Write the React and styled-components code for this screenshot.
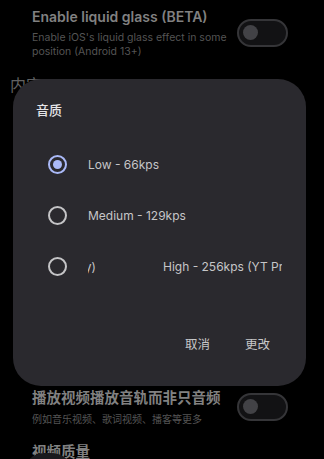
import styled, { createGlobalStyle } from "styled-components"

const GlobalStyle = createGlobalStyle`
  html, body {
    margin: 0;
    padding: 0;
    background: #000;
  }
  body {
    font-family: Inter, "Noto Sans", "Noto Sans CJK SC", sans-serif;
    overflow: hidden;
  }
`

const Screen = styled.div`
  position: relative;
  width: 324px;
  height: 459px;
  overflow: hidden;
  background: #000;
`

const Page = styled.div`
  padding: 6px 36px 0 32px;
  display: flex;
  flex-direction: column;
`

const SettingRow = styled.div`
  display: flex;
  align-items: center;
  justify-content: space-between;
  gap: 6px;
`

const SettingText = styled.div`
  display: flex;
  flex-direction: column;
  gap: ${p => p.$gap || 3}px;
  flex: 1;
  min-width: 0;
`

const SettingTitle = styled.div`
  font-size: ${p => p.$size || 14}px;
  line-height: 22px;
  font-weight: 600;
  color: #8c8c8c;
  white-space: nowrap;
`

const SettingSub = styled.div`
  font-size: ${p => p.$size || 10.5}px;
  line-height: 14px;
  color: #5c5c5c;
`

const Toggle = styled.div`
  flex: none;
  width: 43px;
  height: 24px;
  border: 2px solid #3a3a3d;
  border-radius: 14px;
  background: #141416;
  display: flex;
  align-items: center;
  padding-left: 4px;
  box-sizing: content-box;
  &::before {
    content: "";
    width: 15px;
    height: 15px;
    border-radius: 50%;
    background: #48484c;
  }
`

const SectionHeader = styled.div`
  margin: 15px 0 0 -22px;
  font-size: 16px;
  line-height: 22px;
  color: #6a6a6a;
`

const Hidden = styled.div`
  height: 291px;
`

const Scrim = styled.div`
  position: absolute;
  inset: 0;
  background: rgba(0, 0, 0, 0.08);
`

const Dialog = styled.div`
  position: absolute;
  left: 13px;
  top: 79px;
  width: 293px;
  height: 307px;
  box-sizing: border-box;
  border-radius: 28px;
  background: #2a292e;
  padding: 22px 24px 23px 23px;
  display: flex;
  flex-direction: column;
`

const DialogTitle = styled.div`
  font-size: 13px;
  line-height: 18px;
  color: #e4e4e6;
  font-weight: 500;
`

const Options = styled.div`
  margin-top: 20px;
  display: flex;
  flex-direction: column;
`

const Option = styled.div`
  height: 51px;
  display: flex;
  align-items: center;
  padding-left: 12px;
  gap: 21px;
`

const Radio = styled.div`
  flex: none;
  width: 15px;
  height: 15px;
  border-radius: 50%;
  border: 2px solid ${p => (p.$checked ? "#aab9f7" : "#c4c4c6")};
  display: flex;
  align-items: center;
  justify-content: center;
  &::after {
    content: "";
    display: ${p => (p.$checked ? "block" : "none")};
    width: 9px;
    height: 9px;
    border-radius: 50%;
    background: #aab9f7;
  }
`

const Label = styled.div`
  font-size: 12px;
  color: #c6c6c8;
  white-space: nowrap;
`

const MarqueeBox = styled.div`
  width: 198px;
  overflow: hidden;
`

const MarqueeTrack = styled.div`
  display: flex;
  width: max-content;
  transform: translateX(calc(-50% + 75px));
`

const MarqueeItem = styled(Label)`
  padding-right: 67px;
`

const Actions = styled.div`
  margin-top: auto;
  display: flex;
  justify-content: flex-end;
  gap: 11px;
`

const TextButton = styled.div`
  height: 40px;
  padding: 0 12px;
  display: flex;
  align-items: center;
  font-size: 12.5px;
  color: #c6c6c8;
  font-family: "Noto Sans CJK SC", sans-serif;
`

const PeekCard = styled.div`
  position: absolute;
  left: 24px;
  top: 453px;
  width: 48px;
  height: 40px;
  border-radius: 22px;
  background: #1d1d21;
`

const options = [
  { label: "Low - 66kps", checked: true },
  { label: "Medium - 129kps" },
  { label: "High - 256kps (YT Premium Only)", marquee: true },
]

export default function App() {
  return (
    <Screen>
      <GlobalStyle />
      <Page>
        <SettingRow>
          <SettingText>
            <SettingTitle>Enable liquid glass (BETA)</SettingTitle>
            <SettingSub>Enable iOS's liquid glass effect in some position (Android 13+)</SettingSub>
          </SettingText>
          <Toggle />
        </SettingRow>
        <SectionHeader>内容</SectionHeader>
        <Hidden />
        <SettingRow>
          <SettingText $gap={3}>
            <SettingTitle $size={14.5}>播放视频播放音轨而非只音频</SettingTitle>
            <SettingSub $size={10}>例如音乐视频、歌词视频、播客等更多</SettingSub>
          </SettingText>
          <Toggle />
        </SettingRow>
        <SettingTitle $size={14.5} style={{ marginTop: 15 }}>视频质量</SettingTitle>
      </Page>
      <PeekCard />
      <Scrim />
      <Dialog>
        <DialogTitle>音质</DialogTitle>
        <Options>
          {options.map(o => (
            <Option key={o.label}>
              <Radio $checked={o.checked} />
              {o.marquee ? (
                <MarqueeBox>
                  <MarqueeTrack>
                    <MarqueeItem>{o.label}</MarqueeItem>
                    <MarqueeItem>{o.label}</MarqueeItem>
                  </MarqueeTrack>
                </MarqueeBox>
              ) : (
                <Label>{o.label}</Label>
              )}
            </Option>
          ))}
        </Options>
        <Actions>
          <TextButton>取消</TextButton>
          <TextButton>更改</TextButton>
        </Actions>
      </Dialog>
    </Screen>
  )
}
